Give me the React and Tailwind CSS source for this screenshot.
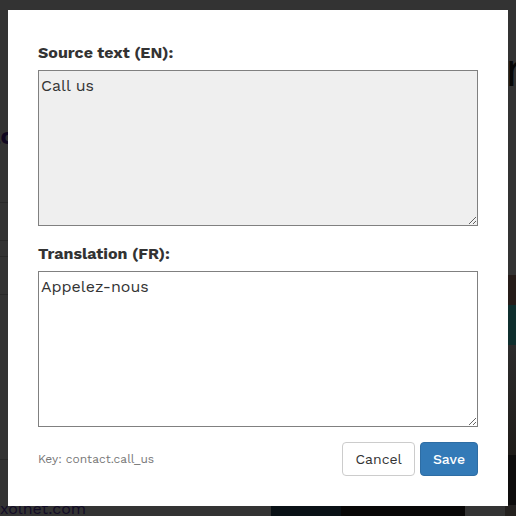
function Field({ id, label, ...props }) {
  return (
    <div>
      <label htmlFor={id} className="mb-[5px] block text-base leading-[25px] font-bold">
        {label}
      </label>
      <textarea
        id={id}
        className="block h-[156px] w-full resize-y rounded-none border border-[#808080] px-[2px] py-[2px] text-base leading-[25px] text-[#333] read-only:bg-[#efefef]"
        {...props}
      />
    </div>
  );
}

function PageBehind() {
  return (
    <div aria-hidden="true" className="absolute inset-0 flex justify-between overflow-hidden bg-[#333]">
      <div className="flex w-[100px] flex-col *:shrink-0">
        <div className="mt-[121px] flex h-[81px] w-[14px] justify-end text-2xl leading-[30px] font-bold text-[#100821]">ac</div>
        <div className="h-[39px] border-y border-[#292929]" />
        <div className="mt-[15px] h-[39px] border-y border-[#292929]" />
        <div className="mt-[164px] h-[40px] border-t border-[#292929]" />
        <div className="text-base leading-5 text-[#120b27]">xolnet.com</div>
      </div>
      <div className="mt-[505px] ml-[171px] flex grow">
        <div className="h-[11px] w-[70px] bg-[#0a1116]" />
        <div className="h-[11px] w-[124px] bg-[#080707]" />
      </div>
      <div className="w-[11px]">
        <div className="mt-[40px] h-[60px] text-[48px] leading-[60px] text-[#070707]">n</div>
        <div className="mt-[175px] h-[30px] bg-[#251c19]" />
        <div className="h-[40px] bg-[#0f2f2e]" />
        <div className="h-[110px] bg-linear-to-b from-[#2c2c2c] to-[#1f1c19]" />
        <div className="h-[50px] bg-[#0e0d0d]" />
        <div className="h-[11px] bg-[#24211f]" />
      </div>
    </div>
  );
}

export default function App() {
  return (
    <div className="relative min-h-screen px-2 py-[10px] font-['Work_Sans','Inter','Liberation_Sans',sans-serif] text-[#333]">
      <PageBehind />
      <form
        role="dialog"
        aria-label="Edit translation"
        onSubmit={(e) => e.preventDefault()}
        className="relative flex flex-col gap-[15px] bg-white p-[30px]"
      >
        <Field id="source" label="Source text (EN):" defaultValue="Call us" readOnly />
        <Field id="translation" label="Translation (FR):" defaultValue="Appelez-nous" />
        <div className="flex items-center justify-between">
          <span className="text-xs text-[#777]">Key: contact.call_us</span>
          <div className="flex gap-[5px]">
            <button type="button" className="h-[34px] rounded border border-[#ccc] bg-white px-3 text-sm">
              Cancel
            </button>
            <button type="submit" className="h-[34px] rounded border border-[#2e6da4] bg-[#337ab7] px-3 text-sm font-medium text-white">
              Save
            </button>
          </div>
        </div>
      </form>
    </div>
  );
}
